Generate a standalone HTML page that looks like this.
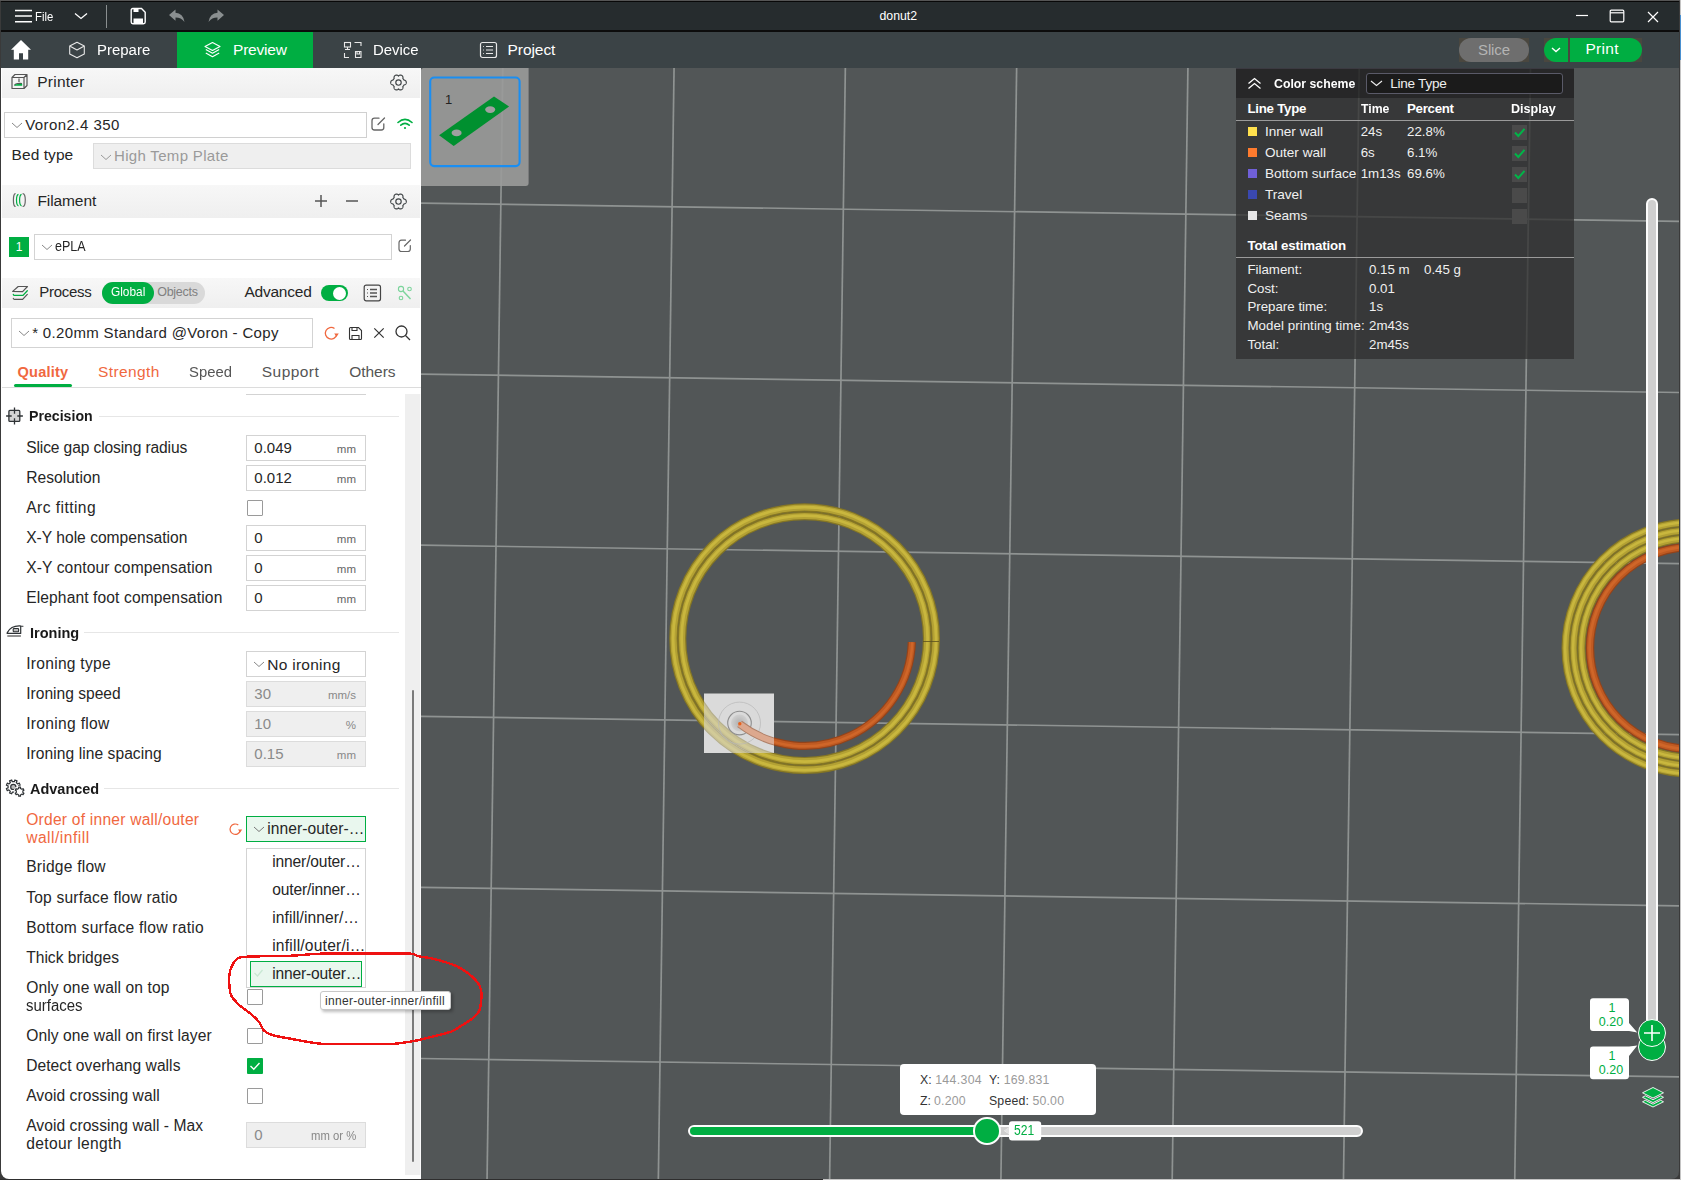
<!DOCTYPE html>
<html><head><meta charset="utf-8"><title>donut2</title>
<style>
html,body{margin:0;padding:0;width:1681px;height:1180px;overflow:hidden;background:#3a3a3a}
body{position:relative;font-family:"Liberation Sans",sans-serif}
.t{position:absolute;white-space:nowrap;line-height:1}
.r{position:absolute;display:block}
</style></head><body>
<div class="r" style="left:0px;top:0px;width:1681px;height:1180px;background:#3a3a3a"></div>
<div class="r" style="left:0px;top:0px;width:1681px;height:1px;background:#555"></div>
<div class="r" style="left:1px;top:1px;width:1678px;height:1px;background:#080808"></div>
<div class="r" style="left:1px;top:2px;width:1678px;height:29px;background:#262c2e"></div>
<div class="r" style="left:1px;top:30px;width:1678px;height:2px;background:#0c0c0c"></div>
<div class="r" style="left:1px;top:32px;width:1678px;height:36px;background:#3b4346"></div>
<svg class="r" style="left:14px;top:9px;" width="19" height="15" viewBox="0 0 19 15"><path d="M1 1.4H18M1 7.1H18M1 12.8H18" stroke="#fff" stroke-width="1.5"/></svg>
<div class="t " style="left:35.00px;top:9.99px;font-size:13px;color:#fff;transform:scaleX(0.8688);transform-origin:0 0;">File</div>
<svg class="r" style="left:74px;top:12px;" width="14" height="8" viewBox="0 0 14 8"><path d="M1 1.5L7 6.5L13 1.5" stroke="#fff" stroke-width="1.3" fill="none"/></svg>
<div class="r" style="left:106px;top:5px;width:1px;height:23px;background:#8a8f90"></div>
<svg class="r" style="left:129px;top:7px;" width="18" height="18" viewBox="0 0 18 18"><path d="M2.2 3.2Q2.2 1.5 3.9 1.5H12.5L16.2 5.2V15.1Q16.2 16.8 14.5 16.8H3.9Q2.2 16.8 2.2 15.1Z" stroke="#fff" stroke-width="1.4" fill="none"/><rect x="4.5" y="2" width="5" height="3" fill="#fff"/><rect x="4.5" y="11.5" width="9.5" height="4.5" fill="#fff"/></svg>
<svg class="r" style="left:168px;top:9px;" width="18" height="14" viewBox="0 0 18 14"><path d="M1 6L7.5 0.5V3.8Q15 4 16.5 13Q13 8.5 7.5 8.6V11.8Z" fill="#8a8f90"/></svg>
<svg class="r" style="left:207px;top:9px;" width="18" height="14" viewBox="0 0 18 14"><path d="M17 6L10.5 0.5V3.8Q3 4 1.5 13Q5 8.5 10.5 8.6V11.8Z" fill="#8a8f90"/></svg>
<div class="t " style="left:879.50px;top:10.48px;font-size:12.3px;color:#fff;letter-spacing:-0.004px;">donut2</div>
<svg class="r" style="left:1575px;top:13px;" width="14" height="4" viewBox="0 0 14 4"><path d="M1 2.5H13" stroke="#fff" stroke-width="1.2"/></svg>
<svg class="r" style="left:1609px;top:9px;" width="16" height="14" viewBox="0 0 16 14"><rect x="1.2" y="1.2" width="13.6" height="11.6" rx="1" stroke="#fff" stroke-width="1.2" fill="none"/><path d="M1.2 3.8H14.8" stroke="#fff" stroke-width="1.2"/></svg>
<svg class="r" style="left:1647px;top:11px;" width="12" height="12" viewBox="0 0 12 12"><path d="M1 1L11 11M11 1L1 11" stroke="#fff" stroke-width="1.2"/></svg>
<svg class="r" style="left:10px;top:39px;" width="22" height="22" viewBox="0 0 22 22"><path d="M11 1L21 10.8H18.2V20.5H13V14.3H9V20.5H3.8V10.8H1Z" fill="#fff"/></svg>
<svg class="r" style="left:68px;top:41px;" width="18" height="18" viewBox="0 0 18 18"><path d="M9 1.2L16.3 5.1V12.9L9 16.8L1.7 12.9V5.1Z M1.7 5.1L9 9L16.3 5.1" stroke="#e8e8e8" stroke-width="1.1" fill="none" stroke-linejoin="round"/></svg>
<div class="t " style="left:96.80px;top:41.87px;font-size:15.5px;color:#fff;transform:scaleX(0.9648);transform-origin:0 0;">Prepare</div>
<div class="r" style="left:177px;top:32px;width:136px;height:36px;background:#00ae42"></div>
<svg class="r" style="left:203px;top:41px;" width="19" height="18" viewBox="0 0 19 18"><path d="M9.5 1.5L17 5.5L9.5 9.5L2 5.5Z" stroke="#fff" stroke-width="1.1" fill="none" stroke-linejoin="round"/><path d="M2.8 8.5L9.5 12.2L16.2 8.5 M2.8 12L9.5 15.8L16.2 12" stroke="#fff" stroke-width="1.1" fill="none" stroke-linejoin="round"/></svg>
<div class="t " style="left:233.00px;top:41.87px;font-size:15.5px;color:#fff;letter-spacing:-0.188px;">Preview</div>
<svg class="r" style="left:343px;top:41px;" width="20" height="18" viewBox="0 0 20 18"><rect x="1.5" y="1.5" width="6" height="4.5" stroke="#e8e8e8" stroke-width="1.1" fill="none"/><path d="M4.5 6V8.5M2 8.5H7 M11.5 1.5H18V5 M1.5 12V16.5H6 M12.5 10.5H18V16.5H12.5Z M14 10.5V13H16.5V10.5" stroke="#e8e8e8" stroke-width="1.1" fill="none"/></svg>
<div class="t " style="left:372.60px;top:41.87px;font-size:15.5px;color:#fff;transform:scaleX(0.9625);transform-origin:0 0;">Device</div>
<svg class="r" style="left:479px;top:41px;" width="19" height="18" viewBox="0 0 19 18"><rect x="1.5" y="1.5" width="16" height="15" rx="2" stroke="#e8e8e8" stroke-width="1.2" fill="none"/><path d="M7 5.5H14M7 9H14M7 12.5H14" stroke="#e8e8e8" stroke-width="1.2"/><path d="M4.2 5.5H5M4.2 9H5M4.2 12.5H5" stroke="#e8e8e8" stroke-width="1.2"/></svg>
<div class="t " style="left:507.50px;top:41.87px;font-size:15.5px;color:#fff;letter-spacing:-0.057px;">Project</div>
<div class="r" style="left:1459px;top:38px;width:70px;height:24px;background:#4a473f"></div>
<div class="r" style="left:1459px;top:38px;width:70px;height:24px;background:#6e6e6e;border-radius:12px"></div>
<div class="t " style="left:1478.00px;top:41.80px;font-size:15px;color:#b4b4b4;letter-spacing:-0.128px;">Slice</div>
<div class="r" style="left:1544px;top:38px;width:98px;height:24px;background:#4a473f"></div>
<div class="r" style="left:1544px;top:38px;width:24px;height:24px;background:#00ae42;border-radius:12px 0 0 12px"></div>
<div class="r" style="left:1569.7px;top:38px;width:72.3px;height:24px;background:#00ae42;border-radius:0 12px 12px 0"></div>
<svg class="r" style="left:1551px;top:47px;" width="10" height="6" viewBox="0 0 10 6"><path d="M1 1L5 4.5L9 1" stroke="#fff" stroke-width="1.4" fill="none"/></svg>
<div class="t " style="left:1585.50px;top:41.37px;font-size:15.5px;color:#fff;letter-spacing:0.282px;">Print</div>
<div class="r" style="left:1px;top:68px;width:420px;height:1111px;background:#fff;border-bottom-left-radius:8px"></div>
<div class="r" style="left:2px;top:68px;width:418px;height:30px;background:linear-gradient(#f7f7f7,#efefef)"></div>
<svg class="r" style="left:10px;top:73px;" width="19" height="17" viewBox="0 0 19 17"><path d="M2 4.5L5 1.5H17V12.5L14 15.5H2Z M2 4.5H14V15.5 M14 4.5L17 1.5" stroke="#555" stroke-width="1.2" fill="none" stroke-linejoin="round"/><path d="M9 5.5V9 M4.5 12.5Q5 10 12 10.5" stroke="#555" stroke-width="1.2" fill="none"/><path d="M4.3 12.7Q5 10.6 12.2 10.8V12.7Z" fill="#00ae42"/></svg>
<div class="t " style="left:37.30px;top:73.87px;font-size:15.5px;color:#262626;letter-spacing:0.225px;">Printer</div>
<svg class="r" style="left:389.5px;top:73.5px;" width="17" height="17" viewBox="0 0 17 17"><path d="M16.30 8.50 L16.28 8.84 L16.21 9.17 L16.09 9.50 L15.93 9.81 L15.72 10.10 L15.46 10.37 L15.16 10.60 L14.80 10.79 L14.37 10.93 L13.86 11.00 L13.73 11.22 L13.61 11.45 L13.48 11.67 L13.33 11.88 L13.18 12.09 L13.02 12.29 L12.85 12.49 L12.94 12.94 L12.99 13.39 L12.95 13.81 L12.86 14.19 L12.72 14.53 L12.54 14.84 L12.32 15.11 L12.07 15.35 L11.79 15.55 L11.48 15.71 L11.16 15.82 L10.83 15.89 L10.49 15.91 L10.14 15.89 L9.79 15.82 L9.45 15.69 L9.11 15.50 L8.79 15.26 L8.50 14.93 L8.21 15.26 L7.89 15.50 L7.55 15.69 L7.21 15.82 L6.86 15.89 L6.51 15.91 L6.17 15.89 L5.84 15.82 L5.52 15.71 L5.21 15.55 L4.93 15.35 L4.68 15.11 L4.46 14.84 L4.28 14.53 L4.14 14.19 L4.05 13.81 L4.01 13.39 L4.06 12.94 L4.15 12.49 L3.98 12.29 L3.82 12.09 L3.67 11.88 L3.52 11.67 L3.39 11.45 L3.27 11.22 L3.14 11.00 L2.63 10.93 L2.20 10.79 L1.84 10.60 L1.54 10.37 L1.28 10.10 L1.07 9.81 L0.91 9.50 L0.79 9.17 L0.72 8.84 L0.70 8.50 L0.72 8.16 L0.79 7.83 L0.91 7.50 L1.07 7.19 L1.28 6.90 L1.54 6.63 L1.84 6.40 L2.20 6.21 L2.63 6.07 L3.14 6.00 L3.27 5.78 L3.39 5.55 L3.52 5.33 L3.67 5.12 L3.82 4.91 L3.98 4.71 L4.15 4.51 L4.06 4.06 L4.01 3.61 L4.05 3.19 L4.14 2.81 L4.28 2.47 L4.46 2.16 L4.68 1.89 L4.93 1.65 L5.21 1.45 L5.52 1.29 L5.84 1.18 L6.17 1.11 L6.51 1.09 L6.86 1.11 L7.21 1.18 L7.55 1.31 L7.89 1.50 L8.21 1.74 L8.50 2.07 L8.79 1.74 L9.11 1.50 L9.45 1.31 L9.79 1.18 L10.14 1.11 L10.49 1.09 L10.83 1.11 L11.16 1.18 L11.48 1.29 L11.79 1.45 L12.07 1.65 L12.32 1.89 L12.54 2.16 L12.72 2.47 L12.86 2.81 L12.95 3.19 L12.99 3.61 L12.94 4.06 L12.85 4.51 L13.02 4.71 L13.18 4.91 L13.33 5.12 L13.48 5.33 L13.61 5.55 L13.73 5.78 L13.86 6.00 L14.37 6.07 L14.80 6.21 L15.16 6.40 L15.46 6.63 L15.72 6.90 L15.93 7.19 L16.09 7.50 L16.21 7.83 L16.28 8.16Z" stroke="#3f4446" stroke-width="1.15" fill="none" stroke-linejoin="round"/><circle cx="8.5" cy="8.5" r="2.7" stroke="#3f4446" stroke-width="1.15" fill="none"/></svg>
<div class="r" style="left:4px;top:112px;width:363px;height:26px;border:1px solid #d0d0d0;box-sizing:border-box;background:#fff"></div>
<svg class="r" style="left:10.5px;top:122px;" width="12" height="7" viewBox="0 0 12 7"><path d="M1 1L6 5.5L11 1" stroke="#888" stroke-width="1" fill="none"/></svg>
<div class="t " style="left:25.20px;top:117.10px;font-size:15px;color:#262626;letter-spacing:0.441px;">Voron2.4 350</div>
<svg class="r" style="left:370px;top:116px;" width="17" height="16" viewBox="0 0 17 16"><path d="M9 2.2H4.5Q2 2.2 2 4.7V11.5Q2 14 4.5 14H11.3Q13.8 14 13.8 11.5V7.8 M8 8.5L14.5 2" stroke="#666" stroke-width="1.3" fill="none" stroke-linecap="round"/></svg>
<svg class="r" style="left:396px;top:117px;" width="18" height="13" viewBox="0 0 18 13"><path d="M2 5.5Q9 -0.8 16 5.5 M4.8 8.2Q9 4.4 13.2 8.2" stroke="#00ae42" stroke-width="1.6" fill="none" stroke-linecap="round"/><circle cx="9" cy="11" r="1.1" fill="#00ae42"/></svg>
<div class="t " style="left:11.60px;top:146.87px;font-size:15.5px;color:#262626;letter-spacing:0.060px;">Bed type</div>
<div class="r" style="left:93px;top:143px;width:318px;height:26px;border:1px solid #dcdcdc;box-sizing:border-box;background:#efefef"></div>
<svg class="r" style="left:100px;top:153.5px;" width="12" height="7" viewBox="0 0 12 7"><path d="M1 1L6 5.5L11 1" stroke="#999" stroke-width="1" fill="none"/></svg>
<div class="t " style="left:114.00px;top:148.29px;font-size:15px;color:#9a9a9a;letter-spacing:0.323px;">High Temp Plate</div>
<div class="r" style="left:2px;top:185px;width:418px;height:33px;background:linear-gradient(#f7f7f7,#efefef)"></div>
<svg class="r" style="left:8px;top:188px;" width="24" height="24" viewBox="0 0 24 24"><path d="M7.6 5.7Q5.4 5.6 5.4 12.1Q5.4 18.6 7.6 18.5" stroke="#666" stroke-width="1.2" fill="none"/><path d="M14.6 5.7Q17.3 5.6 17.3 12.1Q17.3 18.6 14.6 18.5" stroke="#666" stroke-width="1.2" fill="none"/><path d="M10.5 6.3Q8.5 6.6 8.5 12.1Q8.5 17.6 10.5 17.8 M13.6 6.3Q11.6 6.6 11.6 12.1Q11.6 17.6 13.6 17.8" stroke="#00ae42" stroke-width="1.2" fill="none"/></svg>
<div class="t " style="left:37.50px;top:193.17px;font-size:15.5px;color:#262626;letter-spacing:-0.105px;">Filament</div>
<svg class="r" style="left:314px;top:194px;" width="14" height="14" viewBox="0 0 14 14"><path d="M7 1V13M1 7H13" stroke="#555" stroke-width="1.5"/></svg>
<svg class="r" style="left:345px;top:194px;" width="14" height="14" viewBox="0 0 14 14"><path d="M1 7H13" stroke="#555" stroke-width="1.5"/></svg>
<svg class="r" style="left:389.5px;top:192.5px;" width="17" height="17" viewBox="0 0 17 17"><path d="M16.30 8.50 L16.28 8.84 L16.21 9.17 L16.09 9.50 L15.93 9.81 L15.72 10.10 L15.46 10.37 L15.16 10.60 L14.80 10.79 L14.37 10.93 L13.86 11.00 L13.73 11.22 L13.61 11.45 L13.48 11.67 L13.33 11.88 L13.18 12.09 L13.02 12.29 L12.85 12.49 L12.94 12.94 L12.99 13.39 L12.95 13.81 L12.86 14.19 L12.72 14.53 L12.54 14.84 L12.32 15.11 L12.07 15.35 L11.79 15.55 L11.48 15.71 L11.16 15.82 L10.83 15.89 L10.49 15.91 L10.14 15.89 L9.79 15.82 L9.45 15.69 L9.11 15.50 L8.79 15.26 L8.50 14.93 L8.21 15.26 L7.89 15.50 L7.55 15.69 L7.21 15.82 L6.86 15.89 L6.51 15.91 L6.17 15.89 L5.84 15.82 L5.52 15.71 L5.21 15.55 L4.93 15.35 L4.68 15.11 L4.46 14.84 L4.28 14.53 L4.14 14.19 L4.05 13.81 L4.01 13.39 L4.06 12.94 L4.15 12.49 L3.98 12.29 L3.82 12.09 L3.67 11.88 L3.52 11.67 L3.39 11.45 L3.27 11.22 L3.14 11.00 L2.63 10.93 L2.20 10.79 L1.84 10.60 L1.54 10.37 L1.28 10.10 L1.07 9.81 L0.91 9.50 L0.79 9.17 L0.72 8.84 L0.70 8.50 L0.72 8.16 L0.79 7.83 L0.91 7.50 L1.07 7.19 L1.28 6.90 L1.54 6.63 L1.84 6.40 L2.20 6.21 L2.63 6.07 L3.14 6.00 L3.27 5.78 L3.39 5.55 L3.52 5.33 L3.67 5.12 L3.82 4.91 L3.98 4.71 L4.15 4.51 L4.06 4.06 L4.01 3.61 L4.05 3.19 L4.14 2.81 L4.28 2.47 L4.46 2.16 L4.68 1.89 L4.93 1.65 L5.21 1.45 L5.52 1.29 L5.84 1.18 L6.17 1.11 L6.51 1.09 L6.86 1.11 L7.21 1.18 L7.55 1.31 L7.89 1.50 L8.21 1.74 L8.50 2.07 L8.79 1.74 L9.11 1.50 L9.45 1.31 L9.79 1.18 L10.14 1.11 L10.49 1.09 L10.83 1.11 L11.16 1.18 L11.48 1.29 L11.79 1.45 L12.07 1.65 L12.32 1.89 L12.54 2.16 L12.72 2.47 L12.86 2.81 L12.95 3.19 L12.99 3.61 L12.94 4.06 L12.85 4.51 L13.02 4.71 L13.18 4.91 L13.33 5.12 L13.48 5.33 L13.61 5.55 L13.73 5.78 L13.86 6.00 L14.37 6.07 L14.80 6.21 L15.16 6.40 L15.46 6.63 L15.72 6.90 L15.93 7.19 L16.09 7.50 L16.21 7.83 L16.28 8.16Z" stroke="#3f4446" stroke-width="1.15" fill="none" stroke-linejoin="round"/><circle cx="8.5" cy="8.5" r="2.7" stroke="#3f4446" stroke-width="1.15" fill="none"/></svg>
<div class="r" style="left:9px;top:237px;width:20px;height:20px;background:#00ae42"></div>
<div class="t " style="left:15.66px;top:241.34px;font-size:12px;color:#fff;">1</div>
<div class="r" style="left:34px;top:234px;width:358px;height:26px;border:1px solid #d3d3d3;box-sizing:border-box;background:#fff"></div>
<svg class="r" style="left:40.5px;top:244px;" width="12" height="7" viewBox="0 0 12 7"><path d="M1 1L6 5.5L11 1" stroke="#888" stroke-width="1" fill="none"/></svg>
<div class="t " style="left:55.00px;top:239.34px;font-size:14px;color:#262626;transform:scaleX(0.8935);transform-origin:0 0;">ePLA</div>
<svg class="r" style="left:397px;top:238px;" width="16" height="16" viewBox="0 0 16 16"><path d="M8.5 2.2H4.5Q2 2.2 2 4.7V11Q2 13.5 4.5 13.5H10.8Q13.3 13.5 13.3 11V7.5 M7.5 8L13.5 2" stroke="#666" stroke-width="1.2" fill="none" stroke-linecap="round"/></svg>
<div class="r" style="left:2px;top:278px;width:418px;height:30px;background:linear-gradient(#f7f7f7,#efefef)"></div>
<svg class="r" style="left:8px;top:280px;" width="24" height="24" viewBox="0 0 24 24"><path d="M4.7 11.4L10.2 6.5H19.5L14.6 11.6Z" stroke="#555" stroke-width="1.2" fill="none" stroke-linejoin="round"/><path d="M5.3 14.3Q5.5 15.4 6.5 15.4H15L19.3 10.8" stroke="#00ae42" stroke-width="1.3" fill="none" stroke-linecap="round"/><path d="M5.3 18.3Q5.5 19.3 6.5 19.3H14.6L19.3 14.4" stroke="#555" stroke-width="1.2" fill="none" stroke-linecap="round"/></svg>
<div class="t " style="left:39.30px;top:284.10px;font-size:15px;color:#262626;letter-spacing:-0.281px;">Process</div>
<div class="r" style="left:102px;top:282px;width:103px;height:22px;background:#d9d9d9;border-radius:11px"></div>
<div class="r" style="left:102px;top:282px;width:52px;height:22px;background:#00ae42;border-radius:11px"></div>
<div class="t " style="left:111.20px;top:286.41px;font-size:12.5px;color:#fff;transform:scaleX(0.9493);transform-origin:0 0;">Global</div>
<div class="t " style="left:157.20px;top:286.41px;font-size:12.5px;color:#808080;letter-spacing:-0.263px;">Objects</div>
<div class="t " style="left:244.40px;top:283.67px;font-size:15.5px;color:#262626;letter-spacing:-0.220px;">Advanced</div>
<div class="r" style="left:321px;top:285px;width:27px;height:16px;background:#00ae42;border-radius:8px"></div>
<div class="r" style="left:333px;top:286.5px;width:13px;height:13px;background:#fff;border-radius:50%"></div>
<svg class="r" style="left:363px;top:284px;" width="19" height="18" viewBox="0 0 19 18"><rect x="1.2" y="1.2" width="16.3" height="15.6" rx="2" stroke="#444" stroke-width="1.2" fill="none"/><path d="M7 5.5H14M7 9H14M7 12.5H14" stroke="#555" stroke-width="1.4"/><path d="M4 5.5H5M4 9H5M4 12.5H5" stroke="#555" stroke-width="1.2"/></svg>
<svg class="r" style="left:397px;top:285px;" width="16" height="16" viewBox="0 0 16 16"><circle cx="4" cy="4" r="2.6" stroke="#7bd49b" stroke-width="1.1" fill="none"/><circle cx="12.5" cy="4" r="1.8" stroke="#7bd49b" stroke-width="1.1" fill="none"/><circle cx="4" cy="13" r="1.8" stroke="#7bd49b" stroke-width="1.1" fill="none"/><path d="M6 6L13.5 14" stroke="#7bd49b" stroke-width="1.4"/></svg>
<div class="r" style="left:11px;top:318px;width:302px;height:30px;border:1px solid #d3d3d3;box-sizing:border-box;background:#fff"></div>
<svg class="r" style="left:17.5px;top:330px;" width="12" height="7" viewBox="0 0 12 7"><path d="M1 1L6 5.5L11 1" stroke="#888" stroke-width="1" fill="none"/></svg>
<div class="t " style="left:32.20px;top:325.00px;font-size:15px;color:#262626;letter-spacing:0.337px;">* 0.20mm Standard @Voron - Copy</div>
<svg class="r" style="left:323px;top:325px;" width="17" height="16" viewBox="0 0 17 16"><path d="M13.8 9.5A5.8 5.8 0 1 1 11.5 3.5" stroke="#f0683f" stroke-width="1.3" fill="none"/><path d="M11.2 8.6H15.8L13.5 11.8Z" fill="#f0683f"/></svg>
<svg class="r" style="left:348px;top:326px;" width="15" height="15" viewBox="0 0 15 15"><path d="M1.5 2.5Q1.5 1.5 2.5 1.5H10.5L13.5 4.5V12.5Q13.5 13.5 12.5 13.5H2.5Q1.5 13.5 1.5 12.5Z M4 1.5V4.5H9V1.5 M4 13.5V9.5H11V13.5" stroke="#333" stroke-width="1.1" fill="none"/></svg>
<svg class="r" style="left:373px;top:327px;" width="12" height="12" viewBox="0 0 12 12"><path d="M1.3 1.3L10.7 10.7M10.7 1.3L1.3 10.7" stroke="#333" stroke-width="1.2"/></svg>
<svg class="r" style="left:394px;top:324px;" width="18" height="18" viewBox="0 0 18 18"><circle cx="7.5" cy="7.5" r="5.5" stroke="#333" stroke-width="1.3" fill="none"/><path d="M11.5 11.5L16 16" stroke="#333" stroke-width="1.3"/></svg>
<div class="t " style="left:17.50px;top:365.13px;font-size:14.6px;color:#f0683f;font-weight:700;letter-spacing:0.185px;">Quality</div>
<div class="r" style="left:14px;top:384px;width:58px;height:3px;background:#00ae42;border-radius:2px"></div>
<div class="t " style="left:98.00px;top:364.37px;font-size:15.5px;color:#f0683f;letter-spacing:0.386px;">Strength</div>
<div class="t " style="left:188.60px;top:364.37px;font-size:15.5px;color:#555;transform:scaleX(0.9572);transform-origin:0 0;">Speed</div>
<div class="t " style="left:261.80px;top:364.37px;font-size:15.5px;color:#555;letter-spacing:0.435px;">Support</div>
<div class="t " style="left:349.30px;top:364.37px;font-size:15.5px;color:#555;letter-spacing:-0.063px;">Others</div>
<div class="r" style="left:2px;top:387px;width:419px;height:1px;background:#dcdcdc"></div>
<div class="r" style="left:405px;top:394px;width:16px;height:781px;background:#efefef"></div>
<div class="r" style="left:420px;top:394px;width:1px;height:781px;background:#fafafa"></div>
<div class="r" style="left:412px;top:690px;width:2px;height:472px;background:#7a7a7a;border-radius:1px"></div>
<div class="r" style="left:246px;top:394px;width:120px;height:1px;background:#d3d3d3"></div>
<div class="t " style="left:28.70px;top:408.34px;font-size:15.3px;color:#1a1a1a;font-weight:700;transform:scaleX(0.9248);transform-origin:0 0;">Precision</div>
<div class="r" style="left:99px;top:416px;width:300px;height:1px;background:#e6e6e6"></div>
<svg class="r" style="left:0px;top:400px;" width="30" height="30" viewBox="0 0 30 30"><rect x="8.9" y="10.4" width="10.9" height="11" rx="1" stroke="#2f3336" stroke-width="1.3" fill="#d4d4d4"/><path d="M14.5 7.4V13.7M14.5 18.3V24.4M6.1 16H11.7M17.3 16H22.9" stroke="#2f3336" stroke-width="1.3"/></svg>
<div class="t " style="left:26.20px;top:439.79px;font-size:15.6px;color:#262626;letter-spacing:-0.117px;">Slice gap closing radius</div>
<div class="r" style="left:246px;top:435px;width:120px;height:26px;border:1px solid #d3d3d3;box-sizing:border-box;background:#fff"></div>
<div class="t " style="left:254.30px;top:440.10px;font-size:15px;color:#262626;">0.049</div>
<div class="t " style="left:336.84px;top:443.76px;font-size:11.5px;color:#666;">mm</div>
<div class="t " style="left:26.20px;top:469.79px;font-size:15.6px;color:#262626;letter-spacing:0.054px;">Resolution</div>
<div class="r" style="left:246px;top:465px;width:120px;height:26px;border:1px solid #d3d3d3;box-sizing:border-box;background:#fff"></div>
<div class="t " style="left:254.30px;top:470.10px;font-size:15px;color:#262626;">0.012</div>
<div class="t " style="left:336.84px;top:473.76px;font-size:11.5px;color:#666;">mm</div>
<div class="t " style="left:26.20px;top:499.79px;font-size:15.6px;color:#262626;letter-spacing:0.448px;">Arc fitting</div>
<div class="r" style="left:247px;top:500px;width:16px;height:16px;border:1px solid #9a9a9a;box-sizing:border-box;border-radius:1px;background:#fff"></div>
<div class="t " style="left:26.20px;top:529.79px;font-size:15.6px;color:#262626;letter-spacing:0.009px;">X-Y hole compensation</div>
<div class="r" style="left:246px;top:525px;width:120px;height:26px;border:1px solid #d3d3d3;box-sizing:border-box;background:#fff"></div>
<div class="t " style="left:254.30px;top:530.09px;font-size:15px;color:#262626;">0</div>
<div class="t " style="left:336.84px;top:533.76px;font-size:11.5px;color:#666;">mm</div>
<div class="t " style="left:26.20px;top:559.79px;font-size:15.6px;color:#262626;letter-spacing:0.115px;">X-Y contour compensation</div>
<div class="r" style="left:246px;top:555px;width:120px;height:26px;border:1px solid #d3d3d3;box-sizing:border-box;background:#fff"></div>
<div class="t " style="left:254.30px;top:560.09px;font-size:15px;color:#262626;">0</div>
<div class="t " style="left:336.84px;top:563.76px;font-size:11.5px;color:#666;">mm</div>
<div class="t " style="left:26.20px;top:589.79px;font-size:15.6px;color:#262626;letter-spacing:0.112px;">Elephant foot compensation</div>
<div class="r" style="left:246px;top:585px;width:120px;height:26px;border:1px solid #d3d3d3;box-sizing:border-box;background:#fff"></div>
<div class="t " style="left:254.30px;top:590.09px;font-size:15px;color:#262626;">0</div>
<div class="t " style="left:336.84px;top:593.76px;font-size:11.5px;color:#666;">mm</div>
<div class="t " style="left:29.50px;top:624.84px;font-size:15.3px;color:#1a1a1a;font-weight:700;transform:scaleX(0.9491);transform-origin:0 0;">Ironing</div>
<div class="r" style="left:84px;top:632px;width:315px;height:1px;background:#e6e6e6"></div>
<svg class="r" style="left:0px;top:618px;" width="30" height="26" viewBox="0 0 30 26"><path d="M7.1 15.4H20.7V8.6Q20.7 7.8 19.8 7.9Q11 7.6 7.3 14.6Z" stroke="#2f3336" stroke-width="1.2" fill="none" stroke-linejoin="round"/><rect x="13.2" y="10.5" width="5.4" height="3.2" rx="0.8" stroke="#2f3336" stroke-width="1.1" fill="#bbb"/><path d="M20.7 8.2L23.4 8.3" stroke="#2f3336" stroke-width="1"/><path d="M7.3 18H20.9" stroke="#777" stroke-width="1.6"/></svg>
<div class="t " style="left:26.20px;top:656.29px;font-size:15.6px;color:#262626;letter-spacing:0.271px;">Ironing type</div>
<div class="r" style="left:246px;top:651px;width:120px;height:26px;border:1px solid #d3d3d3;box-sizing:border-box;background:#fff"></div>
<svg class="r" style="left:252.5px;top:661px;" width="12" height="7" viewBox="0 0 12 7"><path d="M1 1L6 5.5L11 1" stroke="#888" stroke-width="1" fill="none"/></svg>
<div class="t " style="left:267.30px;top:656.87px;font-size:15.5px;color:#262626;letter-spacing:0.261px;">No ironing</div>
<div class="t " style="left:26.20px;top:686.29px;font-size:15.6px;color:#262626;letter-spacing:-0.003px;">Ironing speed</div>
<div class="r" style="left:246px;top:681px;width:120px;height:26px;border:1px solid #dcdcdc;box-sizing:border-box;background:#efefef"></div>
<div class="t " style="left:254.30px;top:686.09px;font-size:15px;color:#8a8a8a;">30</div>
<div class="t " style="left:327.90px;top:689.76px;font-size:11.5px;color:#888;">mm/s</div>
<div class="t " style="left:26.20px;top:716.29px;font-size:15.6px;color:#262626;letter-spacing:0.311px;">Ironing flow</div>
<div class="r" style="left:246px;top:711px;width:120px;height:26px;border:1px solid #dcdcdc;box-sizing:border-box;background:#efefef"></div>
<div class="t " style="left:254.30px;top:716.09px;font-size:15px;color:#8a8a8a;">10</div>
<div class="t " style="left:345.77px;top:719.76px;font-size:11.5px;color:#888;">%</div>
<div class="t " style="left:26.20px;top:746.29px;font-size:15.6px;color:#262626;letter-spacing:0.057px;">Ironing line spacing</div>
<div class="r" style="left:246px;top:741px;width:120px;height:26px;border:1px solid #dcdcdc;box-sizing:border-box;background:#efefef"></div>
<div class="t " style="left:254.30px;top:746.09px;font-size:15px;color:#8a8a8a;">0.15</div>
<div class="t " style="left:336.84px;top:749.76px;font-size:11.5px;color:#888;">mm</div>
<div class="t " style="left:29.50px;top:780.84px;font-size:15.3px;color:#1a1a1a;font-weight:700;transform:scaleX(0.9463);transform-origin:0 0;">Advanced</div>
<div class="r" style="left:104px;top:788px;width:295px;height:1px;background:#e6e6e6"></div>
<svg class="r" style="left:0px;top:774px;" width="30" height="30" viewBox="0 0 30 30"><path d="M18.50 13.93 L20.22 14.50 L19.32 16.66 L17.71 15.84 L16.24 17.31 L17.06 18.92 L14.90 19.82 L14.33 18.10 L12.27 18.10 L11.70 19.82 L9.54 18.92 L10.36 17.31 L8.89 15.84 L7.28 16.66 L6.38 14.50 L8.10 13.93 L8.10 11.87 L6.38 11.30 L7.28 9.14 L8.89 9.96 L10.36 8.49 L9.54 6.88 L11.70 5.98 L12.27 7.70 L14.33 7.70 L14.90 5.98 L17.06 6.88 L16.24 8.49 L17.71 9.96 L19.32 9.14 L20.22 11.30 L18.50 11.87Z" stroke="#2f3336" stroke-width="1.2" fill="none" stroke-linejoin="round"/><circle cx="13.3" cy="12.9" r="2.6" stroke="#2f3336" stroke-width="1.2" fill="#bbb"/><path d="M22.88 18.58 L23.96 19.17 L23.05 20.74 L22.00 20.10 L20.48 20.98 L20.51 22.21 L18.69 22.21 L18.72 20.98 L17.20 20.10 L16.15 20.74 L15.24 19.17 L16.32 18.58 L16.32 16.82 L15.24 16.23 L16.15 14.66 L17.20 15.30 L18.72 14.42 L18.69 13.19 L20.51 13.19 L20.48 14.42 L22.00 15.30 L23.05 14.66 L23.96 16.23 L22.88 16.82Z" stroke="#fff" stroke-width="3" fill="#fff" stroke-linejoin="round"/><path d="M22.88 18.58 L23.96 19.17 L23.05 20.74 L22.00 20.10 L20.48 20.98 L20.51 22.21 L18.69 22.21 L18.72 20.98 L17.20 20.10 L16.15 20.74 L15.24 19.17 L16.32 18.58 L16.32 16.82 L15.24 16.23 L16.15 14.66 L17.20 15.30 L18.72 14.42 L18.69 13.19 L20.51 13.19 L20.48 14.42 L22.00 15.30 L23.05 14.66 L23.96 16.23 L22.88 16.82Z" stroke="#2f3336" stroke-width="1.2" fill="#fff" stroke-linejoin="round"/></svg>
<div class="t " style="left:26.20px;top:812.29px;font-size:15.6px;color:#f0683f;letter-spacing:0.232px;">Order of inner wall/outer</div>
<div class="t " style="left:26.20px;top:830.29px;font-size:15.6px;color:#f0683f;letter-spacing:0.492px;">wall/infill</div>
<svg class="r" style="left:228px;top:822px;" width="15" height="14" viewBox="0 0 15 14"><path d="M12.3 8.5A5.2 5.2 0 1 1 10.3 3" stroke="#f0683f" stroke-width="1.2" fill="none"/><path d="M10 7.6H14.2L12.1 10.5Z" fill="#f0683f"/></svg>
<div class="r" style="left:246px;top:816px;width:120px;height:26px;border:1px solid #00ae42;box-sizing:border-box;background:#e9f7ee"></div>
<svg class="r" style="left:252.5px;top:826px;" width="12" height="7" viewBox="0 0 12 7"><path d="M1 1L6 5.5L11 1" stroke="#777" stroke-width="1" fill="none"/></svg>
<div class="t " style="left:267.30px;top:821.29px;font-size:15.6px;color:#262626;letter-spacing:0.064px;">inner-outer-…</div>
<div class="t " style="left:26.20px;top:859.49px;font-size:15.6px;color:#262626;letter-spacing:0.223px;">Bridge flow</div>
<div class="t " style="left:26.20px;top:889.59px;font-size:15.6px;color:#262626;letter-spacing:0.190px;">Top surface flow ratio</div>
<div class="t " style="left:26.20px;top:919.79px;font-size:15.6px;color:#262626;letter-spacing:0.243px;">Bottom surface flow ratio</div>
<div class="t " style="left:26.20px;top:949.59px;font-size:15.6px;color:#262626;letter-spacing:0.002px;">Thick bridges</div>
<div class="t " style="left:26.20px;top:979.79px;font-size:15.6px;color:#262626;letter-spacing:0.102px;">Only one wall on top</div>
<div class="t " style="left:26.20px;top:997.79px;font-size:15.6px;color:#262626;transform:scaleX(0.9583);transform-origin:0 0;">surfaces</div>
<div class="r" style="left:247px;top:989px;width:16px;height:16px;border:1px solid #9a9a9a;box-sizing:border-box;border-radius:1px;background:#fff"></div>
<div class="t " style="left:26.20px;top:1027.79px;font-size:15.6px;color:#262626;letter-spacing:0.098px;">Only one wall on first layer</div>
<div class="r" style="left:247px;top:1028px;width:16px;height:16px;border:1px solid #9a9a9a;box-sizing:border-box;border-radius:1px;background:#fff"></div>
<div class="t " style="left:26.20px;top:1058.09px;font-size:15.6px;color:#262626;letter-spacing:0.041px;">Detect overhang walls</div>
<div class="r" style="left:247px;top:1058px;width:16px;height:16px;background:#00ae42;border-radius:1px"></div>
<svg class="r" style="left:247px;top:1058px;" width="16" height="16" viewBox="0 0 16 16"><path d="M3.5 8L6.8 11.2L12.5 5" stroke="#fff" stroke-width="1.4" fill="none"/></svg>
<div class="t " style="left:26.20px;top:1087.79px;font-size:15.6px;color:#262626;letter-spacing:0.063px;">Avoid crossing wall</div>
<div class="r" style="left:247px;top:1088px;width:16px;height:16px;border:1px solid #9a9a9a;box-sizing:border-box;border-radius:1px;background:#fff"></div>
<div class="t " style="left:26.20px;top:1117.79px;font-size:15.6px;color:#262626;letter-spacing:0.050px;">Avoid crossing wall - Max</div>
<div class="t " style="left:26.20px;top:1135.79px;font-size:15.6px;color:#262626;letter-spacing:0.344px;">detour length</div>
<div class="r" style="left:246px;top:1122px;width:120px;height:26px;border:1px solid #dcdcdc;box-sizing:border-box;background:#efefef"></div>
<div class="t " style="left:254.30px;top:1127.30px;font-size:15px;color:#8a8a8a;">0</div>
<div class="t " style="left:310.80px;top:1130.34px;font-size:12px;color:#888;transform:scaleX(0.9417);transform-origin:0 0;">mm or %</div>
<div class="r" style="left:246px;top:848px;width:120px;height:140px;border:1px solid #d3d3d3;box-sizing:border-box;background:#fff"></div>
<div class="r" style="left:250px;top:961px;width:112px;height:26px;border:1px solid #00ae42;box-sizing:border-box;background:#e9f7ee"></div>
<svg class="r" style="left:253px;top:968px;" width="11" height="10" viewBox="0 0 11 10"><path d="M1.5 5L4.5 8L9.5 2" stroke="#c8e8d2" stroke-width="1.2" fill="none"/></svg>
<div class="t " style="left:272.20px;top:854.29px;font-size:15.6px;color:#262626;letter-spacing:-0.144px;">inner/outer…</div>
<div class="t " style="left:272.20px;top:882.29px;font-size:15.6px;color:#262626;letter-spacing:-0.144px;">outer/inner…</div>
<div class="t " style="left:272.20px;top:910.29px;font-size:15.6px;color:#262626;letter-spacing:0.075px;">infill/inner/…</div>
<div class="t " style="left:272.20px;top:938.29px;font-size:15.6px;color:#262626;letter-spacing:0.210px;">infill/outer/i…</div>
<div class="t " style="left:272.20px;top:966.29px;font-size:15.6px;color:#262626;letter-spacing:-0.167px;">inner-outer…</div>
<svg class="r" style="left:421px;top:68px;" width="1258" height="1111" viewBox="0 0 1258 1111"><defs><clipPath id="vc"><path d="M0 0H1258V1103Q1258 1111 1250 1111H0Z"/></clipPath></defs><g clip-path="url(#vc)"><rect width="1258" height="1111" fill="#525657"/><g stroke="#8f9392" stroke-width="1.7"><line x1="-257.81" y1="-210.92" x2="-279.59" y2="1328.62"/><line x1="-86.56" y1="-208.42" x2="-108.34" y2="1331.12"/><line x1="84.69" y1="-205.92" x2="62.91" y2="1333.62"/><line x1="255.94" y1="-203.42" x2="234.16" y2="1336.12"/><line x1="427.19" y1="-200.92" x2="405.41" y2="1338.62"/><line x1="598.44" y1="-198.42" x2="576.66" y2="1341.12"/><line x1="769.69" y1="-195.92" x2="747.91" y2="1343.62"/><line x1="940.94" y1="-193.42" x2="919.16" y2="1346.12"/><line x1="1112.19" y1="-190.92" x2="1090.41" y2="1348.62"/><line x1="1283.44" y1="-188.42" x2="1261.66" y2="1351.12"/><line x1="-257.81" y1="-210.92" x2="1283.44" y2="-188.42"/><line x1="-260.23" y1="-39.86" x2="1281.02" y2="-17.36"/><line x1="-262.65" y1="131.20" x2="1278.60" y2="153.70"/><line x1="-265.07" y1="302.26" x2="1276.18" y2="324.76"/><line x1="-267.49" y1="473.32" x2="1273.76" y2="495.82"/><line x1="-269.91" y1="644.38" x2="1271.34" y2="666.88"/><line x1="-272.33" y1="815.44" x2="1268.92" y2="837.94"/><line x1="-274.75" y1="986.50" x2="1266.50" y2="1009.00"/><line x1="-277.17" y1="1157.56" x2="1264.08" y2="1180.06"/></g><g transform="translate(0,0)"><path d="M0 2.5Q0 0 2.5 0H107.6V115Q107.6 117.9 104.6 117.9H0Z" fill="#9a9b9a" fill-opacity="0.9"/><rect x="9.2" y="9.5" width="89.4" height="88.6" rx="4" stroke="#1a8ef2" stroke-width="2.1" fill="none"/><polygon points="18.1,67.2 73,28.4 88.1,38.6 32.7,78" fill="#00902f"/><ellipse cx="35.6" cy="64.9" rx="5" ry="3.4" fill="#a0a0a0"/><ellipse cx="69.2" cy="41.6" rx="5" ry="3.4" fill="#a0a0a0"/></g><circle cx="383.6" cy="570.6" r="131.1" stroke="#857624" stroke-width="8.6" fill="none"/><circle cx="383.6" cy="570.6" r="131.1" stroke="#b3a134" stroke-width="6.19" fill="none"/><circle cx="383.6" cy="570.6" r="131.50" stroke="#c9b73e" stroke-width="2.75" fill="none"/><circle cx="383.6" cy="570.6" r="122.6" stroke="#857624" stroke-width="8.6" fill="none"/><circle cx="383.6" cy="570.6" r="122.6" stroke="#b3a134" stroke-width="6.19" fill="none"/><circle cx="383.6" cy="570.6" r="123.00" stroke="#c9b73e" stroke-width="2.75" fill="none"/><path d="M490.84 574.16A107.3 107.3 0 0 1 318.58 655.95" stroke="#94431a" stroke-width="8.2" fill="none" stroke-linecap="butt"/><path d="M490.84 574.16A107.3 107.3 0 0 1 318.58 655.95" stroke="#bf5a22" stroke-width="5.90" fill="none" stroke-linecap="butt"/><path d="M491.24 574.17A107.7 107.7 0 0 1 318.34 656.27" stroke="#cf6629" stroke-width="2.46" fill="none" stroke-linecap="butt"/><path d="M502 573.5H518" stroke="#5a5020" stroke-width="0.8"/><defs><clipPath id="sqc"><rect x="283" y="625.5" width="70" height="59.5"/></clipPath><radialGradient id="noz"><stop offset="0" stop-color="#b0b0b0"/><stop offset="1" stop-color="#d0d0d0"/></radialGradient></defs><rect x="283" y="625.5" width="70" height="59.5" fill="#dadada"/><g clip-path="url(#sqc)" opacity="0.42"><circle cx="383.6" cy="570.6" r="131.1" stroke="#857624" stroke-width="8.6" fill="none"/><circle cx="383.6" cy="570.6" r="131.1" stroke="#b3a134" stroke-width="6.19" fill="none"/><circle cx="383.6" cy="570.6" r="131.50" stroke="#c9b73e" stroke-width="2.75" fill="none"/><circle cx="383.6" cy="570.6" r="122.6" stroke="#857624" stroke-width="8.6" fill="none"/><circle cx="383.6" cy="570.6" r="122.6" stroke="#b3a134" stroke-width="6.19" fill="none"/><circle cx="383.6" cy="570.6" r="123.00" stroke="#c9b73e" stroke-width="2.75" fill="none"/></g><circle cx="318.5" cy="655.1" r="21" stroke="#b8b8b8" stroke-width="0.7" fill="none"/><circle cx="318.5" cy="655.1" r="11.8" stroke="#8e8e8e" stroke-width="1.1" fill="none"/><circle cx="318.5" cy="655.1" r="8.5" fill="url(#noz)"/><path clip-path="url(#sqc)" d="M374.25 677.49A107.3 107.3 0 0 1 318.58 655.95" stroke="#b0826a" stroke-width="7.8" fill="none"/><path clip-path="url(#sqc)" d="M374.25 677.49A107.3 107.3 0 0 1 318.58 655.95" stroke="#dca88e" stroke-width="5.8" fill="none"/><circle cx="318.79999999999995" cy="655.8" r="1.7" fill="#e8601a"/><circle cx="1270" cy="580" r="125.5" stroke="#857624" stroke-width="8.0" fill="none"/><circle cx="1270" cy="580" r="125.5" stroke="#b3a134" stroke-width="5.76" fill="none"/><circle cx="1270" cy="580" r="125.90" stroke="#c9b73e" stroke-width="2.56" fill="none"/><circle cx="1270" cy="580" r="117.5" stroke="#857624" stroke-width="8.0" fill="none"/><circle cx="1270" cy="580" r="117.5" stroke="#b3a134" stroke-width="5.76" fill="none"/><circle cx="1270" cy="580" r="117.90" stroke="#c9b73e" stroke-width="2.56" fill="none"/><circle cx="1270" cy="580" r="109.5" stroke="#857624" stroke-width="8.0" fill="none"/><circle cx="1270" cy="580" r="109.5" stroke="#b3a134" stroke-width="5.76" fill="none"/><circle cx="1270" cy="580" r="109.90" stroke="#c9b73e" stroke-width="2.56" fill="none"/><circle cx="1270" cy="580" r="101" stroke="#94431a" stroke-width="8.4" fill="none"/><circle cx="1270" cy="580" r="101" stroke="#bf5a22" stroke-width="6.05" fill="none"/><circle cx="1270" cy="580" r="101.40" stroke="#cf6629" stroke-width="2.69" fill="none"/></g></svg>
<div class="t " style="left:445.00px;top:92.69px;font-size:13px;color:#222;">1</div>
<div class="r" style="left:1236px;top:68px;width:338px;height:291px;background:rgba(47,47,47,0.76)"></div>
<div class="r" style="left:1236px;top:68px;width:338px;height:1px;background:#5b5a66"></div>
<div class="r" style="left:1236px;top:68px;width:338px;height:30px;background:rgba(20,20,20,0.45)"></div>
<svg class="r" style="left:1247px;top:77px;" width="15" height="13" viewBox="0 0 15 13"><path d="M1.5 6.5L7.5 1.5L13.5 6.5M1.5 11.5L7.5 6.5L13.5 11.5" stroke="#fff" stroke-width="1.3" fill="none"/></svg>
<div class="t " style="left:1274.30px;top:77.33px;font-size:13.3px;color:#fff;font-weight:700;transform:scaleX(0.9243);transform-origin:0 0;">Color scheme</div>
<div class="r" style="left:1365.5px;top:73px;width:197px;height:21px;background:#1b1b1b;border:1px solid #5a5a68;box-sizing:border-box;border-radius:3px"></div>
<svg class="r" style="left:1370px;top:80px;" width="13" height="7" viewBox="0 0 13 7"><path d="M1 1L6.5 5.5L12 1" stroke="#eee" stroke-width="1.1" fill="none"/></svg>
<div class="t " style="left:1390.20px;top:77.08px;font-size:13.6px;color:#eee;letter-spacing:-0.266px;">Line Type</div>
<div class="t " style="left:1247.40px;top:102.03px;font-size:13.3px;color:#fff;font-weight:700;letter-spacing:-0.249px;">Line Type</div>
<div class="t " style="left:1360.70px;top:102.03px;font-size:13.3px;color:#fff;font-weight:700;transform:scaleX(0.9220);transform-origin:0 0;">Time</div>
<div class="t " style="left:1407.00px;top:102.03px;font-size:13.3px;color:#fff;font-weight:700;letter-spacing:-0.298px;">Percent</div>
<div class="t " style="left:1511.20px;top:102.03px;font-size:13.3px;color:#fff;font-weight:700;transform:scaleX(0.9469);transform-origin:0 0;">Display</div>
<div class="r" style="left:1236px;top:120px;width:338px;height:1.2px;background:#9a9a9a"></div>
<div class="r" style="left:1247.5px;top:127.0px;width:9px;height:9px;background:#ffe04d"></div>
<div class="t " style="left:1264.90px;top:124.98px;font-size:13.6px;color:#f0f0f0;">Inner wall</div>
<div class="t " style="left:1360.70px;top:125.23px;font-size:13.3px;color:#f0f0f0;">24s</div>
<div class="t " style="left:1407.00px;top:125.23px;font-size:13.3px;color:#f0f0f0;">22.8%</div>
<div class="r" style="left:1511.5px;top:124.5px;width:15px;height:15px;background:#4a4a4a"></div>
<svg class="r" style="left:1511.5px;top:124.5px;" width="15" height="15" viewBox="0 0 15 15"><path d="M3 7.5L6.3 11L12.5 3.8" stroke="#00b548" stroke-width="2" fill="none"/></svg>
<div class="r" style="left:1247.5px;top:148.0px;width:9px;height:9px;background:#ff7b2e"></div>
<div class="t " style="left:1264.90px;top:145.98px;font-size:13.6px;color:#f0f0f0;">Outer wall</div>
<div class="t " style="left:1360.70px;top:146.23px;font-size:13.3px;color:#f0f0f0;">6s</div>
<div class="t " style="left:1407.00px;top:146.23px;font-size:13.3px;color:#f0f0f0;">6.1%</div>
<div class="r" style="left:1511.5px;top:145.5px;width:15px;height:15px;background:#4a4a4a"></div>
<svg class="r" style="left:1511.5px;top:145.5px;" width="15" height="15" viewBox="0 0 15 15"><path d="M3 7.5L6.3 11L12.5 3.8" stroke="#00b548" stroke-width="2" fill="none"/></svg>
<div class="r" style="left:1247.5px;top:169.0px;width:9px;height:9px;background:#7060d8"></div>
<div class="t " style="left:1264.90px;top:166.98px;font-size:13.6px;color:#f0f0f0;">Bottom surface</div>
<div class="t " style="left:1360.70px;top:167.23px;font-size:13.3px;color:#f0f0f0;">1m13s</div>
<div class="t " style="left:1407.00px;top:167.23px;font-size:13.3px;color:#f0f0f0;">69.6%</div>
<div class="r" style="left:1511.5px;top:166.5px;width:15px;height:15px;background:#4a4a4a"></div>
<svg class="r" style="left:1511.5px;top:166.5px;" width="15" height="15" viewBox="0 0 15 15"><path d="M3 7.5L6.3 11L12.5 3.8" stroke="#00b548" stroke-width="2" fill="none"/></svg>
<div class="r" style="left:1247.5px;top:190.0px;width:9px;height:9px;background:#3a48b0"></div>
<div class="t " style="left:1264.90px;top:187.98px;font-size:13.6px;color:#f0f0f0;">Travel</div>
<div class="r" style="left:1511.5px;top:187.5px;width:15px;height:15px;background:#4a4a4a"></div>
<div class="r" style="left:1247.5px;top:211.0px;width:9px;height:9px;background:#e6e6e6"></div>
<div class="t " style="left:1264.90px;top:208.98px;font-size:13.6px;color:#f0f0f0;">Seams</div>
<div class="r" style="left:1511.5px;top:208.5px;width:15px;height:15px;background:#4a4a4a"></div>
<div class="t " style="left:1247.40px;top:239.43px;font-size:13.3px;color:#fff;font-weight:700;letter-spacing:-0.146px;">Total estimation</div>
<div class="r" style="left:1236px;top:257px;width:338px;height:1.2px;background:#9a9a9a"></div>
<div class="t " style="left:1247.40px;top:262.63px;font-size:13.3px;color:#f0f0f0;">Filament:</div>
<div class="t " style="left:1369.00px;top:262.63px;font-size:13.3px;color:#f0f0f0;">0.15 m</div>
<div class="t " style="left:1247.40px;top:281.55px;font-size:13.3px;color:#f0f0f0;">Cost:</div>
<div class="t " style="left:1369.00px;top:281.55px;font-size:13.3px;color:#f0f0f0;">0.01</div>
<div class="t " style="left:1247.40px;top:300.47px;font-size:13.3px;color:#f0f0f0;">Prepare time:</div>
<div class="t " style="left:1369.00px;top:300.47px;font-size:13.3px;color:#f0f0f0;">1s</div>
<div class="t " style="left:1247.40px;top:319.39px;font-size:13.3px;color:#f0f0f0;letter-spacing:0.065px;">Model printing time:</div>
<div class="t " style="left:1369.00px;top:319.39px;font-size:13.3px;color:#f0f0f0;">2m43s</div>
<div class="t " style="left:1247.40px;top:338.31px;font-size:13.3px;color:#f0f0f0;">Total:</div>
<div class="t " style="left:1369.00px;top:338.31px;font-size:13.3px;color:#f0f0f0;">2m45s</div>
<div class="t " style="left:1424.00px;top:262.63px;font-size:13.3px;color:#f0f0f0;">0.45 g</div>
<div class="r" style="left:1646px;top:198.4px;width:12px;height:842px;background:#cfcfcf;border:2px solid #fcfcfc;box-sizing:border-box;border-radius:6px 6px 0 0"></div>
<div class="r" style="left:1638px;top:1032.7px;width:28px;height:28px;background:#00ae42;border:1.5px solid #fff;box-sizing:border-box;border-radius:50%"></div>
<div class="r" style="left:1638px;top:1018.5px;width:28px;height:28px;background:#00ae42;border:1.5px solid #fff;box-sizing:border-box;border-radius:50%"></div>
<svg class="r" style="left:1643px;top:1023.5px;" width="18" height="18" viewBox="0 0 18 18"><path d="M9 1V17M1 9H17" stroke="#fff" stroke-width="1.6"/></svg>
<svg class="r" style="left:1589px;top:997px;" width="50" height="36" viewBox="0 0 50 36"><path d="M4 1.3H36.5Q40 1.3 40 4.8V26L48.3 35.4L40 34H4Q1 34 1 31V4.3Q1 1.3 4 1.3Z" fill="#fff"/></svg>
<div class="t " style="left:1608.52px;top:1001.71px;font-size:12.5px;color:#00ae42;">1</div>
<div class="t " style="left:1598.84px;top:1015.71px;font-size:12.5px;color:#00ae42;">0.20</div>
<svg class="r" style="left:1589px;top:1045px;" width="50" height="36" viewBox="0 0 50 36"><path d="M4 34.3H36.5Q40 34.3 40 30.8V11L48.3 0.6L40 1.6H4Q1 1.6 1 4.6V31.3Q1 34.3 4 34.3Z" fill="#fff"/></svg>
<div class="t " style="left:1608.52px;top:1049.71px;font-size:12.5px;color:#00ae42;">1</div>
<div class="t " style="left:1598.84px;top:1063.71px;font-size:12.5px;color:#00ae42;">0.20</div>
<svg class="r" style="left:1641px;top:1086px;" width="24" height="22" viewBox="0 0 24 22"><path d="M12 1.5L22.5 6.8L12 12L1.5 6.8Z" fill="#00ae42" stroke="#fff" stroke-width="0.9"/><path d="M4.3 9.8L1.5 11.3L12 16.6L22.5 11.3L19.7 9.8L12 13.7Z" fill="#00ae42" stroke="#fff" stroke-width="0.9"/><path d="M4.3 14.3L1.5 15.8L12 21L22.5 15.8L19.7 14.3L12 18.2Z" fill="#00ae42" stroke="#fff" stroke-width="0.9"/></svg>
<div class="r" style="left:687.5px;top:1124.9px;width:675.5px;height:12.2px;background:#cfcfcf;border:2.2px solid #fcfcfc;box-sizing:border-box;border-radius:6.1px"></div>
<div class="r" style="left:689.7px;top:1127.1px;width:298px;height:7.8px;background:#00ae42;border-radius:3.9px 0 0 3.9px"></div>
<div class="r" style="left:973px;top:1117.3px;width:27.6px;height:27.6px;background:#00ae42;border:2px solid #fcfcfc;box-sizing:border-box;border-radius:50%"></div>
<svg class="r" style="left:1000px;top:1120px;" width="43" height="22" viewBox="0 0 43 22"><path d="M4 10.8L9 7.5V4.3Q9 1.3 12 1.3H38.2Q41.2 1.3 41.2 4.3V17.6Q41.2 20.6 38.2 20.6H12Q9 20.6 9 17.6V14.1Z" fill="#fff"/><path d="M4.2 10.8L9 7.6V14Z" fill="#e2e2e2"/></svg>
<div class="t " style="left:1014.20px;top:1123.51px;font-size:13.8px;color:#00ae42;transform:scaleX(0.8773);transform-origin:0 0;">521</div>
<div class="r" style="left:900px;top:1063.5px;width:196px;height:51px;background:#fff;border-radius:4px"></div>
<div class="t " style="left:920.00px;top:1073.58px;font-size:12.3px;color:#333;">X:</div>
<div class="t " style="left:935.20px;top:1073.58px;font-size:12.3px;color:#9a9a9a;letter-spacing:0.340px;">144.304</div>
<div class="t " style="left:988.90px;top:1073.58px;font-size:12.3px;color:#333;">Y:</div>
<div class="t " style="left:1003.70px;top:1073.58px;font-size:12.3px;color:#9a9a9a;letter-spacing:0.190px;">169.831</div>
<div class="t " style="left:920.00px;top:1095.38px;font-size:12.3px;color:#333;">Z:</div>
<div class="t " style="left:934.00px;top:1095.38px;font-size:12.3px;color:#9a9a9a;letter-spacing:0.230px;">0.200</div>
<div class="t " style="left:988.90px;top:1095.38px;font-size:12.3px;color:#333;letter-spacing:0.223px;">Speed:</div>
<div class="t " style="left:1032.40px;top:1095.38px;font-size:12.3px;color:#9a9a9a;letter-spacing:0.205px;">50.00</div>
<div class="r" style="left:322px;top:993px;width:131px;height:19px;background:rgba(0,0,0,0.25);filter:blur(1.5px);border-radius:2px"></div>
<div class="r" style="left:320px;top:991px;width:131px;height:19px;background:#fff;border:1px solid #c8c8c8;box-sizing:border-box;border-radius:3px"></div>
<div class="t " style="left:325.10px;top:995.04px;font-size:12px;color:#333;letter-spacing:0.299px;">inner-outer-inner/infill</div>
<div class="r" style="left:1680px;top:0px;width:1px;height:1180px;background:#c4c4c4"></div>
<div class="r" style="left:1680px;top:15px;width:1px;height:45px;background:#4a90d0"></div>
<div class="r" style="left:0px;top:1179px;width:823px;height:1px;background:#2e2e2e"></div>
<div class="r" style="left:823px;top:1179px;width:857px;height:1px;background:#c4c4c4"></div>
<svg class="r" style="left:0px;top:0px;pointer-events:none" width="1681" height="1180" viewBox="0 0 1681 1180"><path d="M249.60 956.60C258.57 956.12 279.33 956.20 291.40 955.70C303.47 955.20 308.90 953.97 322.00 953.60C335.10 953.23 355.52 953.52 370.00 953.50C384.48 953.48 400.93 953.07 408.90 953.50C416.87 953.93 414.08 955.28 417.80 956.10C421.52 956.92 426.75 957.43 431.20 958.40C435.65 959.37 440.05 960.50 444.50 961.90C448.95 963.30 453.73 964.72 457.90 966.80C462.07 968.88 466.23 971.80 469.50 974.40C472.77 977.00 475.58 979.80 477.50 982.40C479.42 985.00 480.38 987.03 481.00 990.00C481.62 992.97 481.50 996.72 481.20 1000.20C480.90 1003.68 480.57 1007.93 479.20 1010.90C477.83 1013.87 475.82 1015.63 473.00 1018.00C470.18 1020.37 465.87 1022.87 462.30 1025.10C458.73 1027.33 456.05 1029.62 451.60 1031.40C447.15 1033.18 441.23 1034.32 435.60 1035.80C429.97 1037.28 423.73 1039.07 417.80 1040.30C411.87 1041.53 404.40 1042.62 400.00 1043.20C395.60 1043.78 398.07 1043.68 391.40 1043.80C384.73 1043.92 371.57 1043.90 360.00 1043.90C348.43 1043.90 333.88 1044.72 322.00 1043.80C310.12 1042.88 297.07 1039.88 288.70 1038.40C280.33 1036.92 275.95 1036.23 271.80 1034.90C267.65 1033.57 265.87 1032.48 263.80 1030.40C261.73 1028.32 261.47 1025.07 259.40 1022.40C257.33 1019.73 254.67 1017.22 251.40 1014.40C248.13 1011.58 243.15 1008.62 239.80 1005.50C236.45 1002.38 233.00 998.67 231.30 995.70C229.60 992.73 229.92 991.15 229.60 987.70C229.28 984.25 229.03 978.55 229.40 975.00C229.77 971.45 230.43 969.13 231.80 966.40C233.17 963.67 234.63 960.23 237.60 958.60C240.57 956.97 240.63 957.08 249.60 956.60Z" stroke="#ee1111" stroke-width="2.4" fill="none" shape-rendering="crispEdges"/></svg>
</body></html>
